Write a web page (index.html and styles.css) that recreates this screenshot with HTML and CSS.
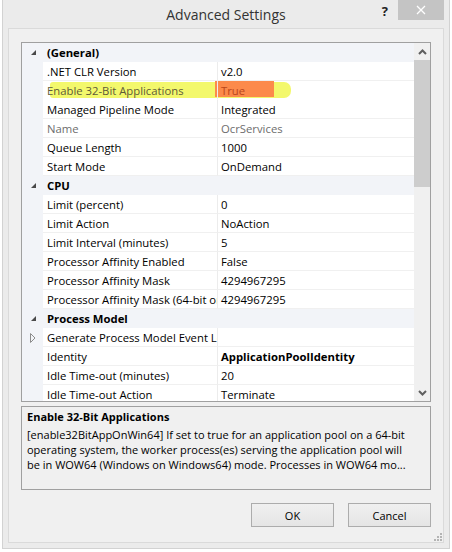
FILE: index.html
```html
<!DOCTYPE html>
<html lang="en">
<head>
    <meta charset="UTF-8">
    <meta name="viewport" content="width=device-width, initial-scale=1.0">
    <title>Advanced Settings</title>
    <link rel="stylesheet" href="styles.css">
</head>
<body>
    <div class="window">
        <div class="titlebar">
            <span></span>
            <span class="title">Advanced Settings</span>
            <div class="title-buttons">
                <span class="help">?</span>
                <span class="close">
                    <svg width="10" height="10" viewBox="0 0 10 10"><path d="M1 1L9 9M9 1L1 9" stroke="#fff" stroke-width="1.3"/></svg>
                </span>
            </div>
        </div>
        <div class="client">
            <div class="grid">
                <div class="rows">
                    <div class="category">
                        <span class="toggle"><svg width="5" height="5" viewBox="0 0 5 5"><polygon points="0,5 5,5 5,0" fill="#4a4a4a"/></svg></span>
                        <span class="cat-name">(General)</span>
                    </div>
                    <div class="prop"><span class="gutter"></span><span class="name">.NET CLR Version</span><span class="value">v2.0</span></div>
                    <div class="prop marked">
                        <span class="marker-yellow"></span>
                        <span class="marker-orange"></span>
                        <span class="gutter"></span><span class="name">Enable 32-Bit Applications</span><span class="value">True</span>
                    </div>
                    <div class="prop"><span class="gutter"></span><span class="name">Managed Pipeline Mode</span><span class="value">Integrated</span></div>
                    <div class="prop disabled"><span class="gutter"></span><span class="name">Name</span><span class="value">OcrServices</span></div>
                    <div class="prop"><span class="gutter"></span><span class="name">Queue Length</span><span class="value">1000</span></div>
                    <div class="prop"><span class="gutter"></span><span class="name">Start Mode</span><span class="value">OnDemand</span></div>
                    <div class="category">
                        <span class="toggle"><svg width="5" height="5" viewBox="0 0 5 5"><polygon points="0,5 5,5 5,0" fill="#4a4a4a"/></svg></span>
                        <span class="cat-name">CPU</span>
                    </div>
                    <div class="prop"><span class="gutter"></span><span class="name">Limit (percent)</span><span class="value">0</span></div>
                    <div class="prop"><span class="gutter"></span><span class="name">Limit Action</span><span class="value">NoAction</span></div>
                    <div class="prop"><span class="gutter"></span><span class="name">Limit Interval (minutes)</span><span class="value">5</span></div>
                    <div class="prop"><span class="gutter"></span><span class="name">Processor Affinity Enabled</span><span class="value">False</span></div>
                    <div class="prop"><span class="gutter"></span><span class="name">Processor Affinity Mask</span><span class="value">4294967295</span></div>
                    <div class="prop"><span class="gutter"></span><span class="name">Processor Affinity Mask (64-bit only)</span><span class="value">4294967295</span></div>
                    <div class="category">
                        <span class="toggle"><svg width="5" height="5" viewBox="0 0 5 5"><polygon points="0,5 5,5 5,0" fill="#4a4a4a"/></svg></span>
                        <span class="cat-name">Process Model</span>
                    </div>
                    <div class="prop">
                        <span class="gutter"><svg width="6" height="10" viewBox="0 0 6 10"><polygon points="0.5,0.5 5,5 0.5,9.5" fill="none" stroke="#8c8c8c"/></svg></span>
                        <span class="name">Generate Process Model Event Log Entry</span><span class="value"></span>
                    </div>
                    <div class="prop"><span class="gutter"></span><span class="name">Identity</span><span class="value changed">ApplicationPoolIdentity</span></div>
                    <div class="prop"><span class="gutter"></span><span class="name">Idle Time-out (minutes)</span><span class="value">20</span></div>
                    <div class="prop"><span class="gutter"></span><span class="name">Idle Time-out Action</span><span class="value">Terminate</span></div>
                </div>
                <div class="scrollbar">
                    <div class="arrow"><svg width="9" height="6" viewBox="0 0 9 6"><polyline points="1,5 4.5,1.5 8,5" fill="none" stroke="#5f5f5f" stroke-width="2"/></svg></div>
                    <div class="thumb"></div>
                    <div class="track"></div>
                    <div class="arrow"><svg width="9" height="6" viewBox="0 0 9 6"><polyline points="1,1 4.5,4.5 8,1" fill="none" stroke="#5f5f5f" stroke-width="2"/></svg></div>
                </div>
            </div>
            <div class="description">
                <div class="desc-title">Enable 32-Bit Applications</div>
                <div class="desc-line">[enable32BitAppOnWin64] If set to true for an application pool on a 64-bit</div>
                <div class="desc-line">operating system, the worker process(es) serving the application pool will</div>
                <div class="desc-line">be in WOW64 (Windows on Windows64) mode. Processes in WOW64 mo...</div>
            </div>
            <div class="buttons">
                <button class="btn">OK</button>
                <button class="btn">Cancel</button>
            </div>
            <span class="grip">
                <svg width="8" height="8" viewBox="0 0 8 8" fill="#b4b4b4">
                    <rect x="6" y="0" width="2" height="2"/>
                    <rect x="3" y="3" width="2" height="2"/><rect x="6" y="3" width="2" height="2"/>
                    <rect x="0" y="6" width="2" height="2"/><rect x="3" y="6" width="2" height="2"/><rect x="6" y="6" width="2" height="2"/>
                </svg>
            </span>
        </div>
    </div>
</body>
</html>
```

FILE: styles.css
```css
body {
    margin: 0;
    background: #fff;
    font-family: "Open Sans", "Noto Sans", sans-serif;
    font-size: 11px;
    color: #000;
}
.window {
    box-sizing: border-box;
    width: 448px;
    height: 549px;
    margin-left: 2px;
    padding: 0 5px 5px 5px;
    background: #ebebeb;
    border: 1px solid #d2d2d2;
    border-top: none;
    display: flex;
    flex-direction: column;
}
.titlebar {
    height: 28px;
    display: grid;
    grid-template-columns: 1fr auto 1fr;
    align-items: start;
}
.title {
    font-size: 14px;
    color: #333;
    line-height: 30px;
}
.title-buttons {
    display: flex;
    justify-content: flex-end;
    align-items: flex-start;
}
.help {
    font-weight: bold;
    font-size: 13px;
    color: #222;
    line-height: 22px;
    margin-right: 10px;
}
.close {
    width: 46px;
    height: 20px;
    background: #c4c4c4;
    display: flex;
    align-items: center;
    justify-content: center;
}
.client {
    position: relative;
    flex: 1;
    background: #f0f0f0;
    border: 1px solid #dadada;
    padding: 13px 12px 0 12px;
    display: flex;
    flex-direction: column;
}
.grid {
    box-sizing: border-box;
    height: 360px;
    border: 1px solid #a0a0a0;
    background: #fff;
    display: flex;
    font-size: 11.3px;
}
.rows {
    flex: 1;
    overflow: hidden;
}
.category, .prop {
    position: relative;
    height: 19px;
    display: grid;
    grid-template-columns: 21px 175px 1fr;
    line-height: 20px;
    white-space: nowrap;
}
.category {
    grid-template-columns: 21px 1fr;
    background: #f2f4f8;
    font-weight: bold;
}
.toggle, .gutter {
    background: #f2f4f8;
    display: flex;
    align-items: center;
    justify-content: center;
    padding-left: 1px;
}
.cat-name {
    padding-left: 4px;
    overflow: hidden;
}
.name {
    position: relative;
    padding-left: 4px;
    border-right: 1px solid #ececec;
    border-bottom: 1px solid #f0f0f0;
    overflow: hidden;
}
.value {
    position: relative;
    padding-left: 3px;
    border-bottom: 1px solid #f0f0f0;
    overflow: hidden;
}
.changed {
    font-weight: bold;
}
.disabled .name, .disabled .value {
    color: #6d6d6d;
}
.marked .gutter {
    position: relative;
}
.marked .name {
    color: #5e5a38;
    border-bottom-color: transparent;
}
.marked .value {
    color: #b9461a;
    border-bottom-color: transparent;
}
.marker-yellow {
    position: absolute;
    left: 28px;
    top: 1px;
    width: 241px;
    height: 16px;
    background: #f3f86c;
    border-radius: 3px 7px 7px 3px;
}
.marker-orange {
    position: absolute;
    left: 193px;
    top: 0;
    width: 59px;
    height: 16px;
    background: #fc8a4b;
}
.marked .marker-yellow, .marked .marker-orange {
    z-index: 0;
}
.marked .name, .marked .value {
    z-index: 1;
}
.scrollbar {
    width: 16px;
    background: #f0f0f0;
    display: flex;
    flex-direction: column;
}
.arrow {
    height: 17px;
    display: flex;
    align-items: center;
    justify-content: center;
}
.thumb {
    height: 127px;
    background: #cdcdcd;
}
.track {
    flex: 1;
}
.description {
    box-sizing: border-box;
    height: 84px;
    margin-top: 4px;
    border: 1px solid #a0a0a0;
    padding: 2px 5px;
    line-height: 15px;
    overflow: hidden;
}
.desc-title {
    font-weight: bold;
    margin-bottom: 3px;
}
.desc-line {
    white-space: nowrap;
}
.buttons {
    display: flex;
    justify-content: flex-end;
    gap: 14px;
    margin-top: 13px;
}
.btn {
    box-sizing: border-box;
    width: 83px;
    height: 24px;
    border: 1px solid #acacac;
    background: linear-gradient(#f0f0f0, #e5e5e5);
    font-family: inherit;
    font-size: 11px;
    color: #000;
    padding: 0;
}
.grip {
    position: absolute;
    right: 1px;
    bottom: 1px;
    display: flex;
}
```
